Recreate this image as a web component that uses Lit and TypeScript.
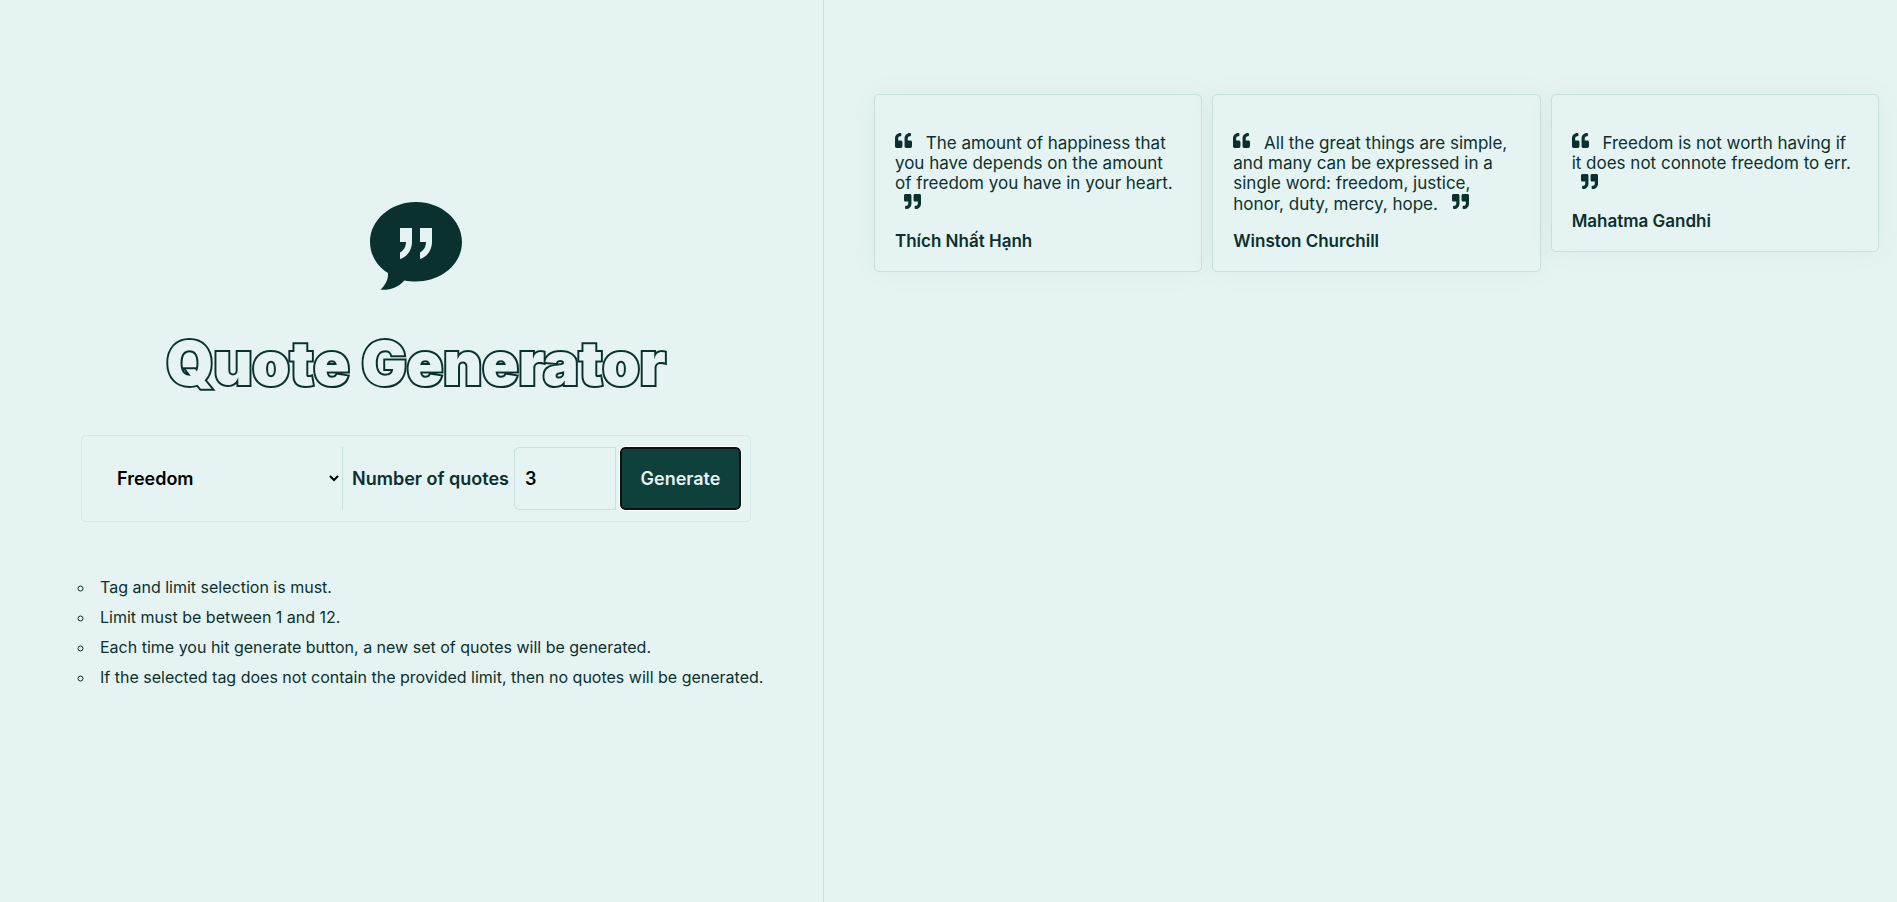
import { LitElement, html, css, svg } from "lit";
import { customElement, property, state } from "lit/decorators.js";

const QUOTE_LEFT =
  "M464 256h-80v-64c0-35.3 28.7-64 64-64h8c13.3 0 24-10.7 24-24V56c0-13.3-10.7-24-24-24h-8c-88.4 0-160 71.6-160 160v240c0 26.5 21.5 48 48 48h128c26.5 0 48-21.5 48-48V304c0-26.5-21.5-48-48-48zm-288 0H96v-64c0-35.3 28.7-64 64-64h8c13.3 0 24-10.7 24-24V56c0-13.3-10.7-24-24-24h-8C71.6 32 0 103.6 0 192v240c0 26.5 21.5 48 48 48h128c26.5 0 48-21.5 48-48V304c0-26.5-21.5-48-48-48z";

interface Quote {
  text: string;
  author: string;
}

@customElement("quote-card")
export class QuoteCard extends LitElement {
  @property() text = "";
  @property() author = "";

  static styles = css`
    :host {
      display: block;
      box-sizing: border-box;
      padding: 20px;
      border: 1px solid #c8dfdd;
      border-radius: 5px;
      background: #e5f3f2;
      box-shadow: 0 0 30px rgba(10, 49, 46, 0.04);
    }
    .text {
      margin: 17px 0;
      font-size: 17px;
      line-height: 20px;
    }
    .mark {
      width: 17px;
      height: 17px;
      fill: currentColor;
      vertical-align: baseline;
    }
    .open {
      margin-right: 9px;
    }
    .close {
      margin-left: 9px;
    }
    .author {
      margin: 0;
      font-size: 17px;
      line-height: 20px;
      font-weight: 600;
    }
  `;

  render() {
    return html`
      <p class="text">
        <svg class="mark open" viewBox="0 0 512 512" aria-hidden="true"><path d=${QUOTE_LEFT} /></svg>
        ${this.text}
        <svg class="mark close" viewBox="0 0 512 512" aria-hidden="true">
          <path d=${QUOTE_LEFT} transform="rotate(180 256 256)" />
        </svg>
      </p>
      <p class="author">${this.author}</p>
    `;
  }
}

@customElement("app-root")
export class AppRoot extends LitElement {
  @state() private quotes: Quote[] = [
    {
      text: "The amount of happiness that you have depends on the amount of freedom you have in your heart.",
      author: "Thích Nhất Hạnh",
    },
    {
      text: "All the great things are simple, and many can be expressed in a single word: freedom, justice, honor, duty, mercy, hope.",
      author: "Winston Churchill",
    },
    {
      text: "Freedom is not worth having if it does not connote freedom to err.",
      author: "Mahatma Gandhi",
    },
  ];

  private notes = [
    "Tag and limit selection is must.",
    "Limit must be between 1 and 12.",
    "Each time you hit generate button, a new set of quotes will be generated.",
    "If the selected tag does not contain the provided limit, then no quotes will be generated.",
  ];

  static styles = css`
    :host {
      display: grid;
      grid-template-columns: 43fr 56fr;
      min-height: 100vh;
      background: #e5f3f2;
      color: #0a312e;
      font-family: Inter, "Noto Sans", sans-serif;
    }
    .panel {
      display: flex;
      flex-direction: column;
      align-items: center;
      justify-content: center;
      padding: 0 51px 8px 60px;
      border-right: 1px solid #c8dfdd;
    }
    .logo {
      width: 92px;
      height: 88px;
    }
    .title {
      margin: 39px 0 38px;
      font-size: 60px;
      line-height: 68px;
      font-weight: 900;
      color: #e5f3f2;
      -webkit-text-stroke: 4px #0a312e;
      paint-order: stroke fill;
    }
    .form {
      display: flex;
      align-items: center;
      box-sizing: border-box;
      width: 100%;
      max-width: 670px;
      padding: 11px 9px;
      border: 1px solid #d5e9e6;
      border-radius: 5px;
      font-size: 18px;
      font-weight: 600;
    }
    .tag {
      flex: 1;
      min-width: 0;
      height: 63px;
      padding: 0 0 0 22px;
      border: 0;
      border-right: 1px solid #c8dfdd;
      border-radius: 0;
      background: transparent;
      color: #000;
      font: inherit;
    }
    .label {
      padding: 0 5px 0 9px;
    }
    .count {
      box-sizing: border-box;
      width: 102px;
      height: 63px;
      padding: 0 10px;
      border: 1px solid #c8dfdd;
      border-radius: 5px 0 0 5px;
      background: transparent;
      color: #000;
      font: inherit;
    }
    .generate {
      box-sizing: border-box;
      width: 121px;
      height: 63px;
      margin-left: 4px;
      padding: 0;
      border: 2px solid #101010;
      border-radius: 5px;
      outline: 1px solid #fff;
      background: #0e403c;
      color: #e5f3f2;
      font: inherit;
    }
    .notes {
      align-self: stretch;
      margin: 50px 0 0;
      padding: 0 0 0 35px;
      list-style: circle;
      font-size: 16px;
      line-height: 30px;
    }
    .note {
      padding-left: 5px;
    }
    .quotes {
      display: grid;
      grid-template-columns: repeat(3, minmax(0, 1fr));
      align-items: start;
      align-content: start;
      gap: 10px;
      padding: 94px 18px 0 50px;
    }
  `;

  render() {
    return html`
      <section class="panel">
        <svg class="logo" viewBox="0 0 92 88" aria-hidden="true">
          <path
            fill="#0a312e"
            d="M46 0C71.400 0 92 17.900 92 40S71.400 79.500 46 79.500C42 79.500 38 79.200 34.300 78.400C28 85.500 20 88.500 10.500 87.700C15.500 83 18.500 77 18 71C7 64 0 53 0 40C0 17.900 20.600 0 46 0Z"
          />
          ${[0, 20].map(
            (x) => svg`<path fill="#e5f3f2" transform=${`translate(${x} 0)`}
              d="M30 26H42V40C42 48 37 55 30 57V50.500C33.500 48.500 36 45 36 40H30Z" />`
          )}
        </svg>
        <h1 class="title">Quote Generator</h1>
        <form class="form" @submit=${(e: Event) => e.preventDefault()}>
          <select class="tag" aria-label="Tag">
            <option>Freedom</option>
          </select>
          <label class="label" for="count">Number of quotes</label>
          <input class="count" id="count" type="number" min="1" max="12" value="3" />
          <button class="generate" type="submit">Generate</button>
        </form>
        <ul class="notes">
          ${this.notes.map((n) => html`<li class="note">${n}</li>`)}
        </ul>
      </section>
      <main class="quotes">
        ${this.quotes.map((q) => html`<quote-card .text=${q.text} .author=${q.author}></quote-card>`)}
      </main>
    `;
  }
}
